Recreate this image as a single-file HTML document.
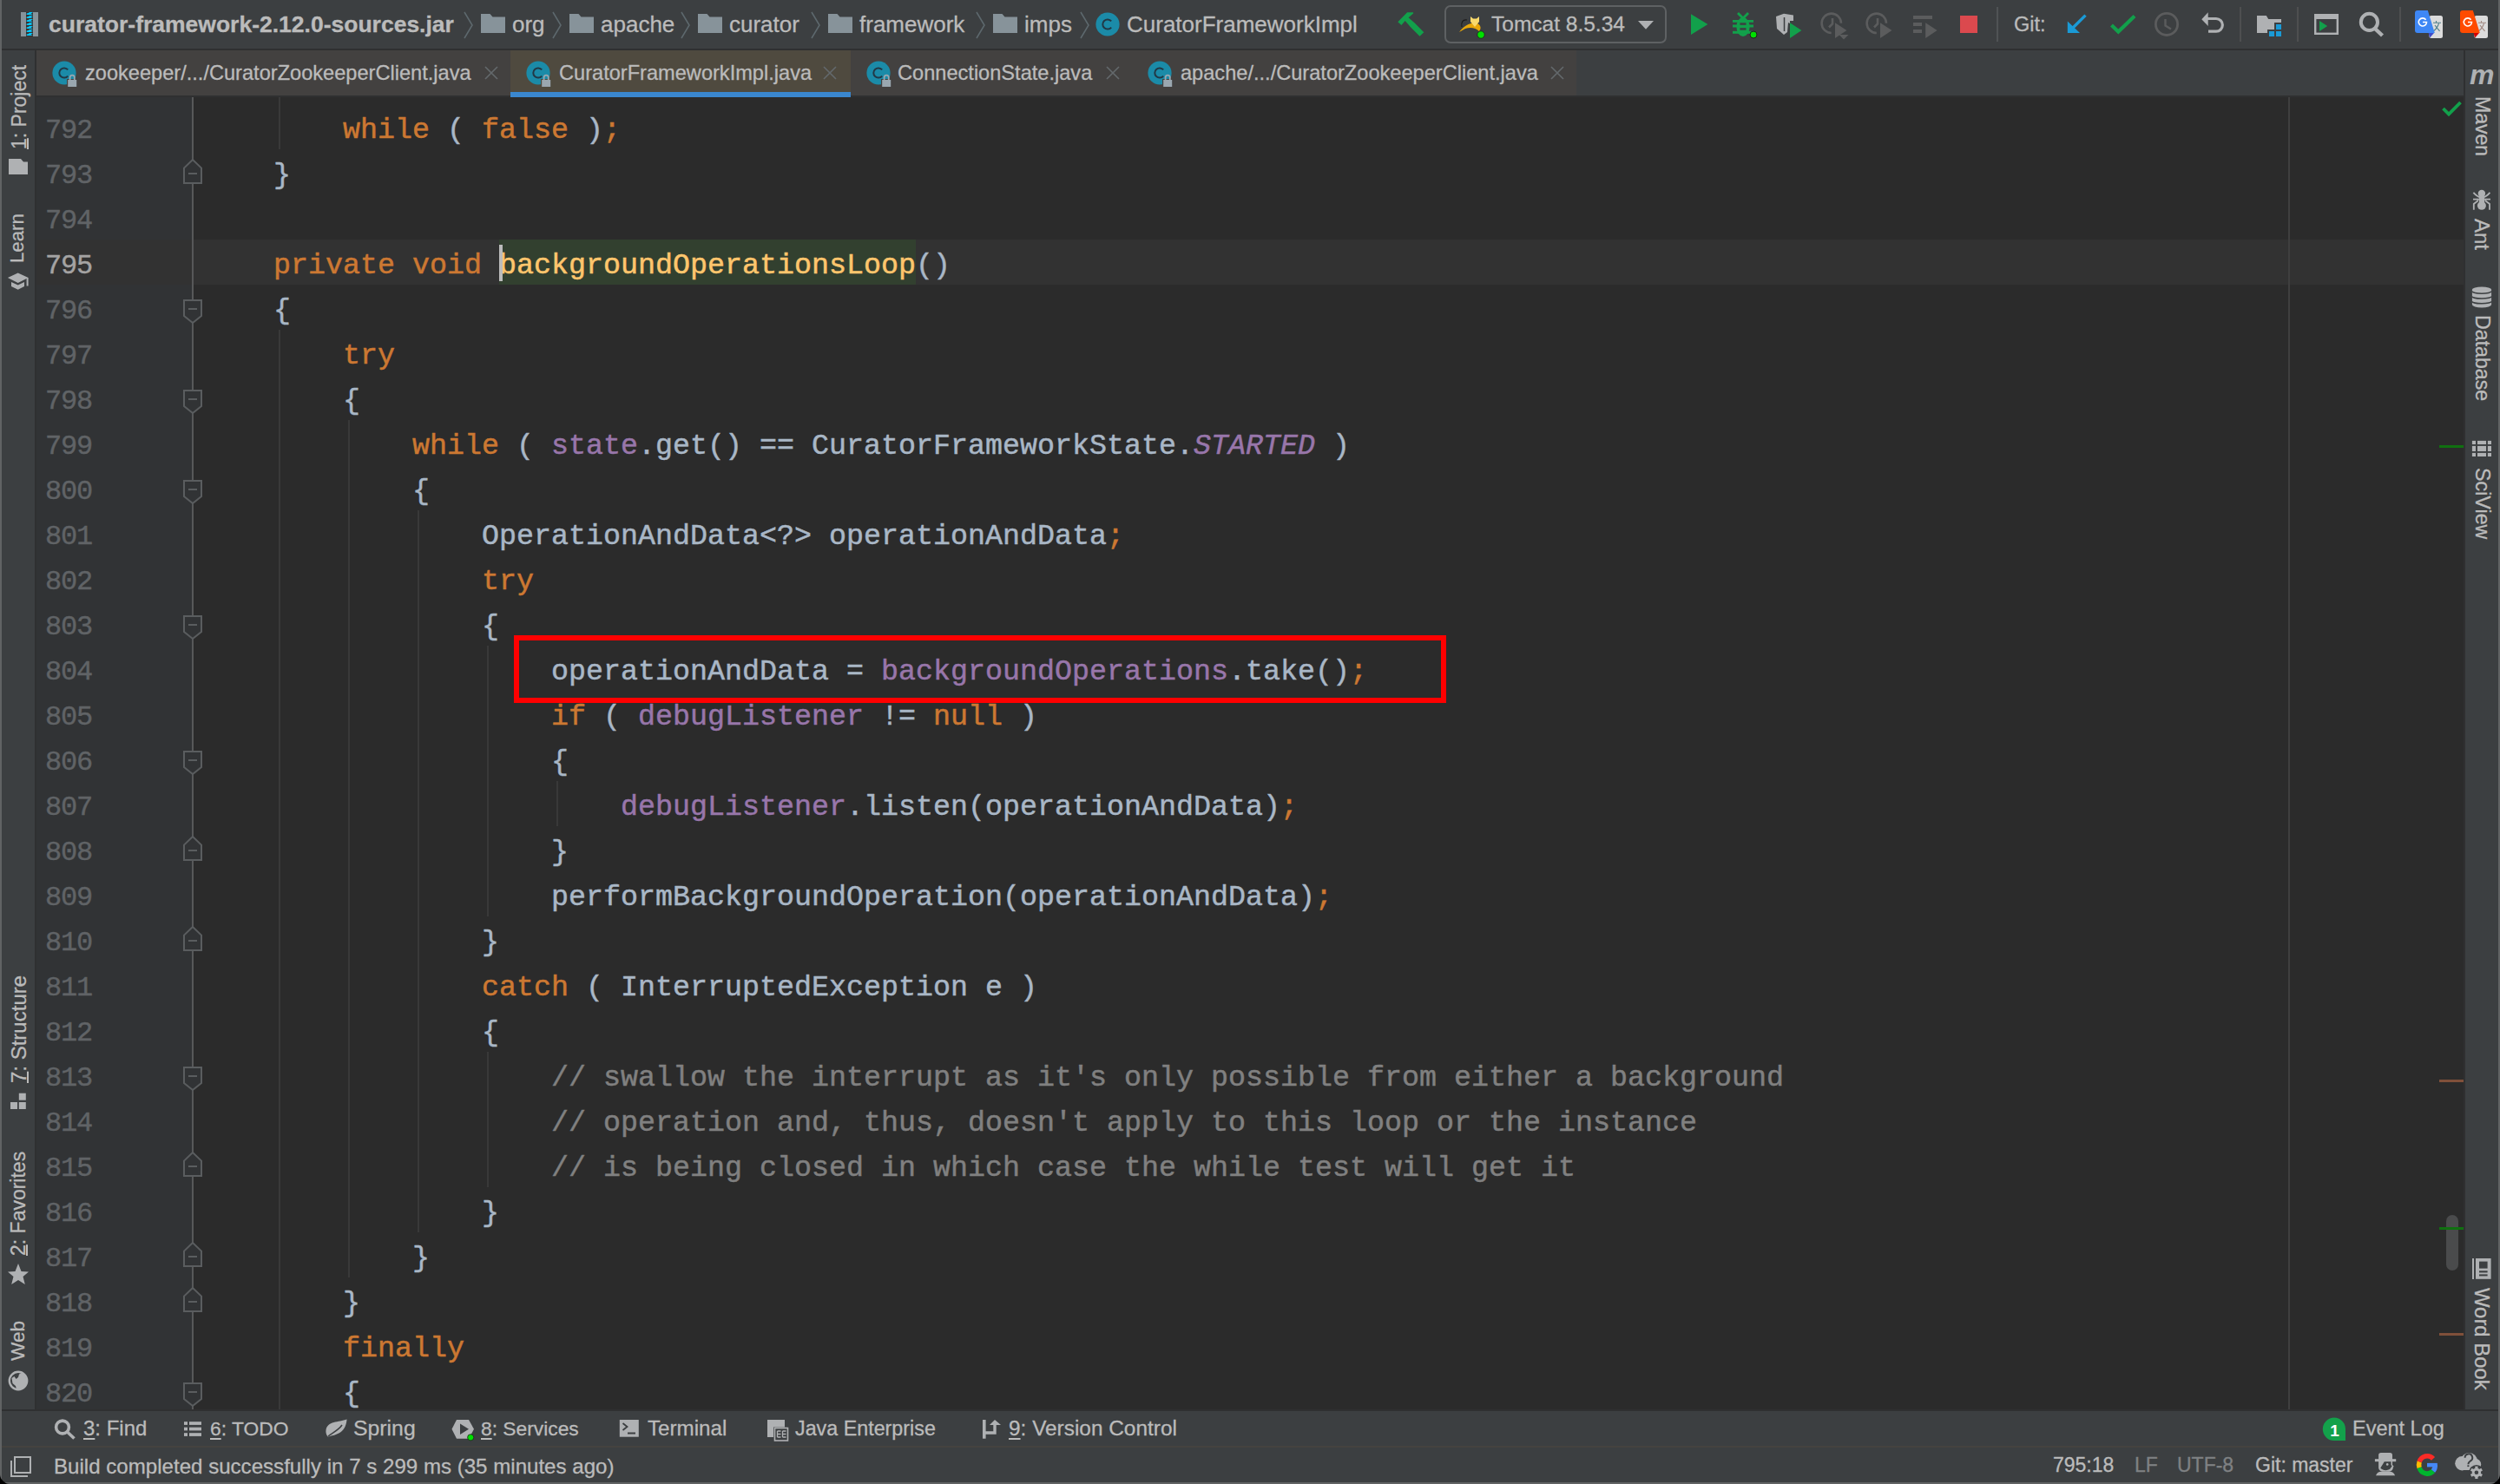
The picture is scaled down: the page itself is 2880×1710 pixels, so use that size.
<!DOCTYPE html>
<html><head><meta charset="utf-8">
<style>
*{margin:0;padding:0;box-sizing:border-box}
html,body{width:2880px;height:1710px;overflow:hidden;background:#000}
body{position:relative;font-family:"Liberation Sans",sans-serif}
.abs{position:absolute}
#win{position:absolute;left:0;top:0;width:2880px;height:1710px;background:#3C3F41;border-radius:0 0 12px 12px;overflow:hidden}
.bd{position:absolute;background:#616364}
.dk{position:absolute;background:#2F3031}
#nav{position:absolute;left:2px;top:0;width:2876px;height:56px;background:#3C3F41}
.nt,.tt,.bt,.st,.vt{-webkit-text-stroke:0.3px currentColor}
.nt{position:absolute;top:0;height:56px;line-height:56px;font-size:26px;color:#BBBBBB;white-space:nowrap}
.tab{position:absolute;top:58px;height:52px;background:#434140}
.tt{position:absolute;top:58px;height:52px;line-height:52px;font-size:23.6px;color:#BBBBBB;white-space:nowrap}
#gutter{position:absolute;left:42px;top:112px;width:181px;height:1512px;background:#313335}
#editor{position:absolute;left:223px;top:112px;width:2615px;height:1512px;background:#2B2B2B}
.ln{position:absolute;height:52px;line-height:52px;font-family:"Liberation Mono",monospace;font-size:33.333px;white-space:pre;color:#A9B7C6}
.ln span{position:relative;top:4px;-webkit-text-stroke:0.5px currentColor}
.num{position:absolute;left:42px;width:64px;text-align:right;height:52px;line-height:52px;font-family:"Liberation Mono",monospace;font-size:32px;letter-spacing:-1.2px;padding-top:5px;color:#606366;white-space:pre}
.num{-webkit-text-stroke:0.4px currentColor}
.num.cur{color:#A4A3A3}
.k{color:#CC7832}.t{color:#A9B7C6}.f{color:#9876AA}.m{color:#FFC66D}.c{color:#808080}.i{color:#9876AA;font-style:italic}
.guide{position:absolute;width:2px;background:#393939}
.fold{position:absolute;left:210px}
.vt{position:absolute;font-size:23px;line-height:23px;color:#BBBBBB;white-space:nowrap;transform-origin:0 0}
.bt{position:absolute;top:1626px;height:40px;line-height:40px;font-size:24px;color:#BBBBBB;white-space:nowrap}
.st{position:absolute;top:1668px;height:40px;line-height:40px;font-size:23.5px;color:#BBBBBB;white-space:nowrap}
u{text-decoration:underline;text-underline-offset:3px}
.vt u{text-underline-offset:1px}
</style></head><body>
<div id="win">
  <!-- navbar -->
  <div id="nav"></div>
  <div class="dk" style="left:0;top:56px;width:2880px;height:2px"></div>
  <div class="nt" style="left:56px;font-weight:bold;font-size:26.5px">curator-framework-2.12.0-sources.jar</div>
  <div class="nt" style="left:590px">org</div>
  <div class="nt" style="left:692px">apache</div>
  <div class="nt" style="left:840px">curator</div>
  <div class="nt" style="left:990px">framework</div>
  <div class="nt" style="left:1180px">imps</div>
  <div class="nt" style="left:1298px">CuratorFrameworkImpl</div>
  <div class="nt" style="left:1718px;font-size:24.5px">Tomcat 8.5.34</div>
  <div class="nt" style="left:2320px;font-size:23.5px">Git:</div>

  <!-- left strip -->
  <div class="abs" style="left:2px;top:58px;width:38px;height:1566px;background:#3C3F41"></div>
  <div class="dk" style="left:40px;top:58px;width:2px;height:1566px"></div>
  <!-- right strip -->
  <div class="dk" style="left:2838px;top:58px;width:2px;height:1566px"></div>
  <div class="abs" style="left:2840px;top:58px;width:38px;height:1566px;background:#3C3F41"></div>

  <!-- tabs -->
  <div class="tab" style="left:42px;width:546px"></div>
  <div class="tab" style="left:588px;width:392px;background:#4F4A3F"></div>
  <div class="tab" style="left:980px;width:836px"></div>
  <div class="tt" style="left:98px">zookeeper/.../CuratorZookeeperClient.java</div>
  <div class="tt" style="left:644px">CuratorFrameworkImpl.java</div>
  <div class="tt" style="left:1034px">ConnectionState.java</div>
  <div class="tt" style="left:1360px">apache/.../CuratorZookeeperClient.java</div>

  <!-- editor -->
  <div class="dk" style="left:42px;top:110px;width:2796px;height:2px"></div>
  <div id="gutter"></div>
  <div id="editor"></div>
  <div class="abs" style="left:42px;top:276px;width:181px;height:52px;background:#323232"></div>
  <div class="abs" style="left:223px;top:276px;width:2615px;height:52px;background:#323232"></div>
  <div class="abs" style="left:575px;top:276px;width:480px;height:52px;background:#32402F"></div>
  <div class="abs" style="left:221px;top:112px;width:2px;height:1512px;background:#575859"></div>
  <div class="abs" style="left:2636px;top:112px;width:2px;height:1512px;background:#3F3F3F"></div>
  <div class="abs" style="left:588px;top:106px;width:392px;height:6px;background:#3A87CF"></div>
<div class="guide" style="left:321px;top:112px;height:60px"></div>
<div class="guide" style="left:321px;top:380px;height:1244px"></div>
<div class="guide" style="left:401px;top:484px;height:988px"></div>
<div class="guide" style="left:481px;top:588px;height:832px"></div>
<div class="guide" style="left:561px;top:744px;height:312px"></div>
<div class="guide" style="left:641px;top:900px;height:52px"></div>
<div class="guide" style="left:561px;top:1212px;height:156px"></div>
<div class="ln" style="top:120px;left:395px"><span class="k">while</span><span class="t"> ( </span><span class="k">false</span><span class="t"> )</span><span class="k">;</span></div>
<div class="num" style="top:120px">792</div>
<div class="ln" style="top:172px;left:315px"><span class="t">}</span></div>
<div class="num" style="top:172px">793</div>
<div class="ln" style="top:224px;left:235px"></div>
<div class="num" style="top:224px">794</div>
<div class="ln" style="top:276px;left:315px"><span class="k">private void </span><span class="m">backgroundOperationsLoop</span><span class="t">()</span></div>
<div class="num cur" style="top:276px">795</div>
<div class="ln" style="top:328px;left:315px"><span class="t">{</span></div>
<div class="num" style="top:328px">796</div>
<div class="ln" style="top:380px;left:395px"><span class="k">try</span></div>
<div class="num" style="top:380px">797</div>
<div class="ln" style="top:432px;left:395px"><span class="t">{</span></div>
<div class="num" style="top:432px">798</div>
<div class="ln" style="top:484px;left:475px"><span class="k">while</span><span class="t"> ( </span><span class="f">state</span><span class="t">.get() == CuratorFrameworkState.</span><span class="i">STARTED</span><span class="t"> )</span></div>
<div class="num" style="top:484px">799</div>
<div class="ln" style="top:536px;left:475px"><span class="t">{</span></div>
<div class="num" style="top:536px">800</div>
<div class="ln" style="top:588px;left:555px"><span class="t">OperationAndData&lt;?&gt; operationAndData</span><span class="k">;</span></div>
<div class="num" style="top:588px">801</div>
<div class="ln" style="top:640px;left:555px"><span class="k">try</span></div>
<div class="num" style="top:640px">802</div>
<div class="ln" style="top:692px;left:555px"><span class="t">{</span></div>
<div class="num" style="top:692px">803</div>
<div class="ln" style="top:744px;left:635px"><span class="t">operationAndData = </span><span class="f">backgroundOperations</span><span class="t">.take()</span><span class="k">;</span></div>
<div class="num" style="top:744px">804</div>
<div class="ln" style="top:796px;left:635px"><span class="k">if</span><span class="t"> ( </span><span class="f">debugListener</span><span class="t"> != </span><span class="k">null</span><span class="t"> )</span></div>
<div class="num" style="top:796px">805</div>
<div class="ln" style="top:848px;left:635px"><span class="t">{</span></div>
<div class="num" style="top:848px">806</div>
<div class="ln" style="top:900px;left:715px"><span class="f">debugListener</span><span class="t">.listen(operationAndData)</span><span class="k">;</span></div>
<div class="num" style="top:900px">807</div>
<div class="ln" style="top:952px;left:635px"><span class="t">}</span></div>
<div class="num" style="top:952px">808</div>
<div class="ln" style="top:1004px;left:635px"><span class="t">performBackgroundOperation(operationAndData)</span><span class="k">;</span></div>
<div class="num" style="top:1004px">809</div>
<div class="ln" style="top:1056px;left:555px"><span class="t">}</span></div>
<div class="num" style="top:1056px">810</div>
<div class="ln" style="top:1108px;left:555px"><span class="k">catch</span><span class="t"> ( InterruptedException e )</span></div>
<div class="num" style="top:1108px">811</div>
<div class="ln" style="top:1160px;left:555px"><span class="t">{</span></div>
<div class="num" style="top:1160px">812</div>
<div class="ln" style="top:1212px;left:635px"><span class="c">// swallow the interrupt as it&#x27;s only possible from either a background</span></div>
<div class="num" style="top:1212px">813</div>
<div class="ln" style="top:1264px;left:635px"><span class="c">// operation and, thus, doesn&#x27;t apply to this loop or the instance</span></div>
<div class="num" style="top:1264px">814</div>
<div class="ln" style="top:1316px;left:635px"><span class="c">// is being closed in which case the while test will get it</span></div>
<div class="num" style="top:1316px">815</div>
<div class="ln" style="top:1368px;left:555px"><span class="t">}</span></div>
<div class="num" style="top:1368px">816</div>
<div class="ln" style="top:1420px;left:475px"><span class="t">}</span></div>
<div class="num" style="top:1420px">817</div>
<div class="ln" style="top:1472px;left:395px"><span class="t">}</span></div>
<div class="num" style="top:1472px">818</div>
<div class="ln" style="top:1524px;left:395px"><span class="k">finally</span></div>
<div class="num" style="top:1524px">819</div>
<div class="ln" style="top:1576px;left:395px"><span class="t">{</span></div>
<div class="num" style="top:1576px">820</div>
<svg class="fold" style="top:183px" width="24" height="29" viewBox="0 0 24 29"><path d="M2 28 H22 V10.6 L12 1 L2 10.6 Z" fill="#313335" stroke="#5A5D5F" stroke-width="2"/><path d="M7 17H17" stroke="#5A5D5F" stroke-width="2"/></svg>
<svg class="fold" style="top:345px" width="24" height="29" viewBox="0 0 24 29"><path d="M2 1 H22 V19 L12 27 L2 19 Z" fill="#313335" stroke="#5A5D5F" stroke-width="2"/><path d="M7 11H17" stroke="#5A5D5F" stroke-width="2"/></svg>
<svg class="fold" style="top:449px" width="24" height="29" viewBox="0 0 24 29"><path d="M2 1 H22 V19 L12 27 L2 19 Z" fill="#313335" stroke="#5A5D5F" stroke-width="2"/><path d="M7 11H17" stroke="#5A5D5F" stroke-width="2"/></svg>
<svg class="fold" style="top:553px" width="24" height="29" viewBox="0 0 24 29"><path d="M2 1 H22 V19 L12 27 L2 19 Z" fill="#313335" stroke="#5A5D5F" stroke-width="2"/><path d="M7 11H17" stroke="#5A5D5F" stroke-width="2"/></svg>
<svg class="fold" style="top:709px" width="24" height="29" viewBox="0 0 24 29"><path d="M2 1 H22 V19 L12 27 L2 19 Z" fill="#313335" stroke="#5A5D5F" stroke-width="2"/><path d="M7 11H17" stroke="#5A5D5F" stroke-width="2"/></svg>
<svg class="fold" style="top:865px" width="24" height="29" viewBox="0 0 24 29"><path d="M2 1 H22 V19 L12 27 L2 19 Z" fill="#313335" stroke="#5A5D5F" stroke-width="2"/><path d="M7 11H17" stroke="#5A5D5F" stroke-width="2"/></svg>
<svg class="fold" style="top:963px" width="24" height="29" viewBox="0 0 24 29"><path d="M2 28 H22 V10.6 L12 1 L2 10.6 Z" fill="#313335" stroke="#5A5D5F" stroke-width="2"/><path d="M7 17H17" stroke="#5A5D5F" stroke-width="2"/></svg>
<svg class="fold" style="top:1067px" width="24" height="29" viewBox="0 0 24 29"><path d="M2 28 H22 V10.6 L12 1 L2 10.6 Z" fill="#313335" stroke="#5A5D5F" stroke-width="2"/><path d="M7 17H17" stroke="#5A5D5F" stroke-width="2"/></svg>
<svg class="fold" style="top:1229px" width="24" height="29" viewBox="0 0 24 29"><path d="M2 1 H22 V19 L12 27 L2 19 Z" fill="#313335" stroke="#5A5D5F" stroke-width="2"/><path d="M7 11H17" stroke="#5A5D5F" stroke-width="2"/></svg>
<svg class="fold" style="top:1327px" width="24" height="29" viewBox="0 0 24 29"><path d="M2 28 H22 V10.6 L12 1 L2 10.6 Z" fill="#313335" stroke="#5A5D5F" stroke-width="2"/><path d="M7 17H17" stroke="#5A5D5F" stroke-width="2"/></svg>
<svg class="fold" style="top:1431px" width="24" height="29" viewBox="0 0 24 29"><path d="M2 28 H22 V10.6 L12 1 L2 10.6 Z" fill="#313335" stroke="#5A5D5F" stroke-width="2"/><path d="M7 17H17" stroke="#5A5D5F" stroke-width="2"/></svg>
<svg class="fold" style="top:1483px" width="24" height="29" viewBox="0 0 24 29"><path d="M2 28 H22 V10.6 L12 1 L2 10.6 Z" fill="#313335" stroke="#5A5D5F" stroke-width="2"/><path d="M7 17H17" stroke="#5A5D5F" stroke-width="2"/></svg>
<svg class="fold" style="top:1593px" width="24" height="29" viewBox="0 0 24 29"><path d="M2 1 H22 V19 L12 27 L2 19 Z" fill="#313335" stroke="#5A5D5F" stroke-width="2"/><path d="M7 11H17" stroke="#5A5D5F" stroke-width="2"/></svg>
  <div class="abs" style="left:575px;top:282px;width:4px;height:42px;background:#BBBBBB"></div>
  <!-- red box -->
  <div class="abs" style="left:592px;top:732px;width:1074px;height:78px;border:6px solid #FF0000"></div>

  <!-- bottom tool bar -->
  <div class="dk" style="left:0;top:1624px;width:2880px;height:2px"></div>
  <div class="abs" style="left:2px;top:1666px;width:2876px;height:2px;background:#45433F"></div>
  <div class="bt" style="left:96px"><u>3</u>: Find</div>
  <div class="bt" style="left:242px;font-size:22.8px"><u>6</u>: TODO</div>
  <div class="bt" style="left:407px;font-size:24.8px">Spring</div>
  <div class="bt" style="left:554px;font-size:22.8px"><u>8</u>: Services</div>
  <div class="bt" style="left:746px;font-size:24.2px">Terminal</div>
  <div class="bt" style="left:916px;font-size:23.3px">Java Enterprise</div>
  <div class="bt" style="left:1162px;font-size:24.4px"><u>9</u>: Version Control</div>
  <div class="bt" style="left:2710px;font-size:23.5px">Event Log</div>

  <!-- status bar -->
  <div class="st" style="left:62px;top:1670px;font-size:24.1px">Build completed successfully in 7 s 299 ms (35 minutes ago)</div>
  <div class="st" style="left:2365px;font-size:23px">795:18</div>
  <div class="st" style="left:2459px;font-size:23px;color:#7F8183">LF</div>
  <div class="st" style="left:2508px;font-size:23px;color:#7F8183">UTF-8</div>
  <div class="st" style="left:2598px;font-size:23px">Git: master</div>


  <!-- vertical strip texts -->
  <div class="vt" style="left:10.5px;top:172px;transform:rotate(-90deg)"><u>1</u>: Project</div>
  <div class="vt" style="left:8px;top:302.5px;font-size:22.2px;transform:rotate(-90deg)">Learn</div>
  <div class="vt" style="left:10px;top:1248px;font-size:24px;transform:rotate(-90deg)"><u>7</u>: Structure</div>
  <div class="vt" style="left:9.5px;top:1447px;transform:rotate(-90deg)"><u>2</u>: Favorites</div>
  <div class="vt" style="left:8.5px;top:1568px;font-size:22.6px;transform:rotate(-90deg)">Web</div>
  <div class="vt" style="left:2871px;top:111px;transform:rotate(90deg)">Maven</div>
  <div class="vt" style="left:2871px;top:252px;font-size:24px;transform:rotate(90deg)">Ant</div>
  <div class="vt" style="left:2871px;top:363px;font-size:23.2px;transform:rotate(90deg)">Database</div>
  <div class="vt" style="left:2871px;top:538.5px;font-size:23.3px;transform:rotate(90deg)">SciView</div>
  <div class="vt" style="left:2871px;top:1484px;font-size:23.9px;transform:rotate(90deg)">Word Book</div>
  <div class="abs" style="left:2845px;top:70px;font-size:32px;font-weight:bold;font-style:italic;color:#AFB1B3;line-height:32px">m</div>
<svg class="abs" style="left:0;top:0" width="2880" height="1710" viewBox="0 0 2880 1710">

<!-- navbar -->
<rect x="24" y="14" width="6" height="28" fill="#87939A"/>
<rect x="38" y="14" width="6" height="28" fill="#87939A"/>
<rect x="30" y="14" width="8" height="28" fill="#3E302C"/>
<path d="M30 17 l4 -3 h4 l-4 3 z M30 21 l4 -3 h4 l-4 3 z M30 25 l4 -3 h4 l-4 3 z M30 29 l4 -3 h4 l-4 3 z M30 33 l4 -3 h4 l-4 3 z M30 37 l4 -3 h4 l-4 3 z M30 41 l4 -3 h4 l-4 3 z" fill="#00C8FF"/>
<path d="M30 15 l4 2 h4 l-4 -2 z M30 19 l4 2 h4 l-4 -2 z M30 23 l4 2 h4 l-4 -2 z M30 27 l4 2 h4 l-4 -2 z M30 31 l4 2 h4 l-4 -2 z M30 35 l4 2 h4 l-4 -2 z M30 39 l4 2 h4 l-4 -2 z" fill="#00C8FF" opacity="0.9"/>
<g transform="translate(535 14)"><path d="M0 0 L9 15 L0 30" fill="none" stroke="#5D686D" stroke-width="1.6"/></g>
<g transform="translate(554 16)">
  <path d="M0 0 H10.5 L13.5 3.6 H28 V22 H0 Z" fill="#87939A"/></g>
<g transform="translate(637 14)"><path d="M0 0 L9 15 L0 30" fill="none" stroke="#5D686D" stroke-width="1.6"/></g>
<g transform="translate(656 16)">
  <path d="M0 0 H10.5 L13.5 3.6 H28 V22 H0 Z" fill="#87939A"/></g>
<g transform="translate(785 14)"><path d="M0 0 L9 15 L0 30" fill="none" stroke="#5D686D" stroke-width="1.6"/></g>
<g transform="translate(804 16)">
  <path d="M0 0 H10.5 L13.5 3.6 H28 V22 H0 Z" fill="#87939A"/></g>
<g transform="translate(935 14)"><path d="M0 0 L9 15 L0 30" fill="none" stroke="#5D686D" stroke-width="1.6"/></g>
<g transform="translate(954 16)">
  <path d="M0 0 H10.5 L13.5 3.6 H28 V22 H0 Z" fill="#87939A"/></g>
<g transform="translate(1125 14)"><path d="M0 0 L9 15 L0 30" fill="none" stroke="#5D686D" stroke-width="1.6"/></g>
<g transform="translate(1144 16)">
  <path d="M0 0 H10.5 L13.5 3.6 H28 V22 H0 Z" fill="#87939A"/></g>
<g transform="translate(1245 14)"><path d="M0 0 L9 15 L0 30" fill="none" stroke="#5D686D" stroke-width="1.6"/></g>
<g transform="translate(1276 28)">
  <circle cx="0" cy="0" r="13.6" fill="#1B8BA8"/>
  <path d="M4.2 -3.6 A5.6 5.6 0 1 0 4.2 3.6" fill="none" stroke="#223845" stroke-width="2"/></g>
<!-- hammer -->
<path d="M1610.3 25.2 L1621.1 14.2 L1628.1 14.2 L1628.1 15.4 L1622.6 20.2 L1629.7 26.6 L1640.3 37.2 L1635.5 41.8 L1625 31.2 L1618.7 24 L1614.4 29 Z" fill="#12A04B"/>
<!-- tomcat box -->
<rect x="1665" y="7" width="254" height="42" rx="6" fill="none" stroke="#5E6163" stroke-width="2"/>
<path d="M1681 37 C1686 30 1692 27 1699 26 C1704 27 1708 31 1704 36 C1700 32 1694 31 1688 33 Z" fill="#E8A70A"/>
<path d="M1694 22 L1694 19 L1697 21.5 L1701 21.5 L1704 19 L1704 25 L1699 31 L1694 25 Z" fill="#F9D96C"/>
<path d="M1684 31 C1683 26 1685 22 1690 23" fill="none" stroke="#1A1A1A" stroke-width="1.2"/>
<circle cx="1706" cy="40" r="4.2" fill="#00E000" stroke="#202020" stroke-width="0.8"/>
<path d="M1887 24 H1905 L1896 33.8 Z" fill="#AFB1B3"/>
<!-- run debug etc -->
<path d="M1948 16.2 V40 L1967.4 28 Z" fill="#12A04B"/>
<g fill="#12A04B">
 <ellipse cx="2008" cy="31" rx="7.6" ry="11"/>
 <rect x="1996" y="23" width="24" height="2.8"/>
 <rect x="1996" y="28.5" width="24" height="3"/>
 <rect x="1996" y="35.8" width="24" height="3"/>
 <path d="M2001 16 L2003 14 L2008 19 L2013 14 L2015 16 L2010 21 L2006 21 Z"/>
</g>
<rect x="2004.4" y="26.3" width="7.1" height="2.5" fill="#3C3F41"/>
<rect x="2004.4" y="32.2" width="7.1" height="2.5" fill="#3C3F41"/>
<circle cx="2020" cy="40" r="4" fill="#00E000" stroke="#202020" stroke-width="1"/>
<path d="M2046 19 L2055 15.8 L2066 17.5 V24 L2062 24 L2062 27 L2060 26 L2059 37 L2055 40 L2047 33 Z" fill="#AFB1B3"/>
<path d="M2055.5 20 V36" stroke="#3C3F41" stroke-width="1.5"/>
<path d="M2062 26.3 V44 L2075.4 35 Z" fill="#12A04B"/>
<g fill="none" stroke="#5B5C5D" stroke-width="2.6">
 <path d="M2121 26.7 A11.2 11.2 0 1 0 2109.7 38"/>
 <path d="M2111 21 V27.5 L2107 31.5"/>
 <path d="M2173 26.7 A11.2 11.2 0 1 0 2161.8 38"/>
 <path d="M2163 21 V27.5 L2159 31.5"/>
</g>
<g fill="#5B5C5D">
 <path d="M2114 26.3 V44 L2127.4 34.9 Z"/>
 <path d="M2118.6 40.1 H2129.5 L2124 45.6 Z"/>
 <path d="M2166 26.3 V44 L2179.5 34.9 Z"/>
 <rect x="2204" y="18" width="22" height="4"/>
 <rect x="2204" y="26" width="10" height="4"/>
 <rect x="2204" y="34" width="10" height="4"/>
 <path d="M2218.2 26.3 V44 L2231.6 34.9 Z"/>
</g>
<rect x="2258" y="18" width="20" height="20" fill="#DB494E"/>
<rect x="2300" y="8" width="2" height="40" fill="#505355"/>
<!-- git -->
<path d="M2381.8 24.5 V38.1 H2396 Z" fill="#1A9AD6"/>
<path d="M2387 33 L2402.5 17.6" stroke="#1A9AD6" stroke-width="3.4"/>
<path d="M2432.5 29 L2440.3 36.5 L2459 18.5" fill="none" stroke="#12A04B" stroke-width="4.2"/>
<circle cx="2496" cy="27.9" r="12.6" fill="none" stroke="#5B5C5D" stroke-width="2.8"/>
<path d="M2494.5 22 V29.5 L2501 33.5" fill="none" stroke="#5B5C5D" stroke-width="2.4"/>
<path d="M2536.3 22.2 L2543.7 14.2 V30 Z" fill="#AFB1B3"/>
<path d="M2543 21.5 H2553 A7.3 7.3 0 0 1 2553 36.2 H2544" fill="none" stroke="#AFB1B3" stroke-width="3.2"/>
<rect x="2580" y="8" width="2" height="40" fill="#4E4F50"/>
<path d="M2600 18 H2610.8 L2613.2 22 H2628 V26 H2620 V34 H2612 V38 H2600 Z" fill="#AFB1B3"/>
<rect x="2622" y="28" width="6" height="6" fill="#1A9AD6"/>
<rect x="2614" y="36" width="6" height="6" fill="#1A9AD6"/>
<rect x="2622" y="36" width="6" height="6" fill="#1A9AD6"/>
<rect x="2646" y="8" width="2" height="40" fill="#4E4F50"/>
<rect x="2667.2" y="17.2" width="25.6" height="21.6" fill="none" stroke="#AFB1B3" stroke-width="2.4"/>
<rect x="2666" y="16" width="28" height="6" fill="#AFB1B3"/>
<path d="M2672 24 V36 L2681.2 30 Z" fill="#12A04B"/>
<circle cx="2729.4" cy="25.4" r="9.6" fill="none" stroke="#AFB1B3" stroke-width="4"/>
<path d="M2736 33 L2744.5 41" stroke="#AFB1B3" stroke-width="4.4"/>
<rect x="2764" y="8" width="2" height="40" fill="#4E4F50"/>
<!-- google translate -->
<g>
 <rect x="2798.4" y="18" width="15.6" height="26" rx="2.5" fill="#DCDCDC"/>
 <path d="M2803 26.2 H2812 M2806.5 24 V26.5 M2809.5 27 C2808 32 2806 34 2803 36 M2805 29 C2807 32 2809 34 2810.5 36" fill="none" stroke="#4F7F8A" stroke-width="1.1"/>
 <path d="M2797.6 38 H2804 L2799.2 43.6 Z" fill="#3F4BC8"/>
 <path d="M2785 12 H2796.8 L2804.8 38 H2785 A3 3 0 0 1 2782 35 V15 A3 3 0 0 1 2785 12 Z" fill="#3E87F5"/>
 <path d="M2794.6 22.7 A4.6 4.6 0 1 0 2795.5 25.5 H2791" fill="none" stroke="#FFFFFF" stroke-width="1.6"/>
</g>
<g transform="translate(52 0)">
 <rect x="2798.4" y="18" width="15.6" height="26" rx="2.5" fill="#DCDCDC"/>
 <path d="M2803 26.2 H2812 M2806.5 24 V26.5 M2809.5 27 C2808 32 2806 34 2803 36 M2805 29 C2807 32 2809 34 2810.5 36" fill="none" stroke="#A08880" stroke-width="1.1"/>
 <path d="M2797.6 38 H2804 L2799.2 43.6 Z" fill="#D40000"/>
 <path d="M2785 12 H2796.8 L2804.8 38 H2785 A3 3 0 0 1 2782 35 V15 A3 3 0 0 1 2785 12 Z" fill="#FF4B00"/>
 <path d="M2794.6 22.7 A4.6 4.6 0 1 0 2795.5 25.5 H2791" fill="none" stroke="#FFFFFF" stroke-width="1.6"/>
</g>
<!-- tab icons -->
<g transform="translate(74 84)">
  
  <circle cx="0" cy="0" r="13.6" fill="#1B8BA8"/>
  <path d="M4.2 -3.6 A5.6 5.6 0 1 0 4.2 3.6" fill="none" stroke="#223845" stroke-width="2"/>
  <rect x="3" y="7" width="12.5" height="10" fill="#434140"/>
  <path d="M6.6 9 V5.2 a2.6 2.6 0 0 1 5.2 0 V9" fill="none" stroke="#9AA7B0" stroke-width="1.8"/>
  <rect x="4.2" y="8" width="10" height="8" fill="#9AA7B0"/></g>
<g transform="translate(546 0)"><g transform="translate(74 84)">
  <circle cx="0" cy="0" r="13.6" fill="#1B8BA8"/>
  <path d="M4.2 -3.6 A5.6 5.6 0 1 0 4.2 3.6" fill="none" stroke="#223845" stroke-width="2"/></g><rect x="77" y="91" width="12.5" height="10" fill="#4F4A3F"/><path d="M80.6 93 V89.2 a2.6 2.6 0 0 1 5.2 0 V93" fill="none" stroke="#9AA7B0" stroke-width="1.8"/><rect x="78.2" y="92" width="10" height="8" fill="#9AA7B0"/></g>
<g transform="translate(1012 84)">
  
  <circle cx="0" cy="0" r="13.6" fill="#1B8BA8"/>
  <path d="M4.2 -3.6 A5.6 5.6 0 1 0 4.2 3.6" fill="none" stroke="#223845" stroke-width="2"/>
  <rect x="3" y="7" width="12.5" height="10" fill="#434140"/>
  <path d="M6.6 9 V5.2 a2.6 2.6 0 0 1 5.2 0 V9" fill="none" stroke="#9AA7B0" stroke-width="1.8"/>
  <rect x="4.2" y="8" width="10" height="8" fill="#9AA7B0"/></g>
<g transform="translate(1336 84)">
  
  <circle cx="0" cy="0" r="13.6" fill="#1B8BA8"/>
  <path d="M4.2 -3.6 A5.6 5.6 0 1 0 4.2 3.6" fill="none" stroke="#223845" stroke-width="2"/>
  <rect x="3" y="7" width="12.5" height="10" fill="#434140"/>
  <path d="M6.6 9 V5.2 a2.6 2.6 0 0 1 5.2 0 V9" fill="none" stroke="#9AA7B0" stroke-width="1.8"/>
  <rect x="4.2" y="8" width="10" height="8" fill="#9AA7B0"/></g>
<g transform="translate(558 76)"><path d="M1 1 L15 15 M15 1 L1 15" stroke="#63686B" stroke-width="1.7"/></g>
<g transform="translate(948 76)"><path d="M1 1 L15 15 M15 1 L1 15" stroke="#63686B" stroke-width="1.7"/></g>
<g transform="translate(1274 76)"><path d="M1 1 L15 15 M15 1 L1 15" stroke="#63686B" stroke-width="1.7"/></g>
<g transform="translate(1786 76)"><path d="M1 1 L15 15 M15 1 L1 15" stroke="#63686B" stroke-width="1.7"/></g>
<!-- editor right markers -->
<path d="M2814.5 125 L2821 131.5 L2834.5 118" fill="none" stroke="#12A04B" stroke-width="3.8"/>
<rect x="2810" y="513" width="28" height="3" fill="#107010"/>
<rect x="2810" y="1244" width="28" height="3" fill="#80503A"/>
<rect x="2818" y="1400" width="14" height="64" rx="7" fill="#4A4B4C"/>
<rect x="2810" y="1414" width="28" height="3" fill="#107010"/>
<rect x="2810" y="1536" width="28" height="3" fill="#80503A"/>
<!-- left strip icons -->
<path d="M10 183 H24 L27 186.5 H32 V201 H10 Z" fill="#AFB1B3" transform="rotate(0)"/>
<path d="M8.9 320 L20.7 314.4 L32.6 320 L20.7 326 Z" fill="#AFB1B3"/>
<path d="M13 325 V330 L20.7 333.8 L28 330 V325 L20.7 328.6 Z" fill="#AFB1B3"/>
<path d="M31.6 320 V329.5" stroke="#AFB1B3" stroke-width="2"/>
<g fill="#AFB1B3">
 <rect x="12" y="1270" width="8" height="8"/><rect x="21.8" y="1259.7" width="8" height="8"/><rect x="21.8" y="1270" width="8" height="8"/>
</g>
<path d="M21 1456 L24.5 1465 L33 1465.5 L26.5 1471 L28.8 1480 L21 1475 L13.2 1480 L15.5 1471 L9 1465.5 L17.5 1465 Z" fill="#AFB1B3"/>
<circle cx="21" cy="1591" r="10.2" fill="none" stroke="#AFB1B3" stroke-width="2.4"/>
<path d="M13.5 1588 L16.5 1586 L18.5 1589 L21 1587 L22 1583.5 L25 1582 L28.5 1584.5 L31 1590 L29.5 1597 L24 1600.5 L19 1601 L18 1597 L14.5 1594 Z" fill="#AFB1B3"/>
<!-- right strip icons -->
<g fill="#AFB1B3">
 <circle cx="2858.9" cy="223" r="4.2"/>
 <ellipse cx="2858.9" cy="237" rx="5" ry="4.8"/>
 <rect x="2856" y="226" width="6" height="8"/>
</g>
<path d="M2849.4 221.9 C2852 225 2855 227 2858.9 228 C2863 227 2866 225 2868.4 221.9 M2849 229.6 H2869 M2849.8 241.8 V235 L2855 231 M2868 241.8 V235 L2862.8 231" stroke="#AFB1B3" stroke-width="1.8" fill="none"/>
<ellipse cx="2859" cy="333.8" rx="11.1" ry="3.4" fill="#AFB1B3"/>
<path d="M2847.9 333.8 V351 A11.1 3.4 0 0 0 2870.1 351 V333.8 Z" fill="#AFB1B3"/>
<g fill="none" stroke="#3C3F41" stroke-width="1.5">
 <path d="M2847.9 335.6 A11.1 2.6 0 0 0 2870.1 335.6"/>
 <path d="M2847.9 341.5 A11.1 2.6 0 0 0 2870.1 341.5"/>
 <path d="M2847.9 347.2 A11.1 2.6 0 0 0 2870.1 347.2"/>
</g>
<g fill="#AFB1B3"><rect x="2847.9" y="507.9" width="4.1" height="4.1"/><rect x="2847.9" y="513.9" width="4.1" height="6.1"/><rect x="2847.9" y="521.9" width="4.1" height="4.1"/><rect x="2854" y="507.9" width="10" height="4.1"/><rect x="2854" y="513.9" width="10" height="6.1"/><rect x="2854" y="521.9" width="10" height="4.1"/><rect x="2865.9" y="507.9" width="4.1" height="4.1"/><rect x="2865.9" y="513.9" width="4.1" height="6.1"/><rect x="2865.9" y="521.9" width="4.1" height="4.1"/></g>
<rect x="2848" y="1450" width="2" height="24" fill="#AFB1B3"/>
<rect x="2852" y="1450" width="17.6" height="23.8" fill="#AFB1B3"/>
<rect x="2856" y="1453.6" width="9.6" height="8" fill="#3C3F41"/>
<rect x="2856" y="1464.3" width="9.6" height="2.1" fill="#3C3F41"/>
<rect x="2856" y="1468.4" width="9.6" height="2" fill="#3C3F41"/>
<!-- bottom toolbar icons -->
<circle cx="72" cy="1644.5" r="7.4" fill="none" stroke="#AFB1B3" stroke-width="3.6"/>
<path d="M77.5 1650 L85.5 1657.5" stroke="#AFB1B3" stroke-width="3.6"/>
<g fill="#AFB1B3">
 <rect x="212" y="1638.2" width="4" height="3.7"/><rect x="218" y="1638.2" width="14" height="3.7"/>
 <rect x="212" y="1644.7" width="4" height="3.7"/><rect x="218" y="1644.7" width="14" height="3.7"/>
 <rect x="212" y="1651.2" width="4" height="3.7"/><rect x="218" y="1651.2" width="14" height="3.7"/>
</g>
<path d="M399.6 1635.4 C390 1639 377 1637 375.5 1648 C375 1652 377 1655 378 1655.5 C385 1653 398 1653 399.6 1635.4 Z" fill="#AFB1B3"/>
<path d="M378 1655 C383 1651 390 1648 394 1642" fill="none" stroke="#3C3F41" stroke-width="1.5"/>
<path d="M526 1636 H540 L546 1646.8 L540 1657.7 H526 L520.5 1646.8 Z" fill="#AFB1B3"/>
<path d="M530 1640.5 V1653 L540 1646.8 Z" fill="#3C3F41"/>
<circle cx="542.2" cy="1656.3" r="3.6" fill="#00E000" stroke="#202020" stroke-width="0.8"/>
<rect x="713.8" y="1636" width="22" height="19.7" fill="#AFB1B3"/>
<path d="M717.5 1640 L722.5 1644 L717.5 1648 M723 1651.5 H732" fill="none" stroke="#3C3F41" stroke-width="1.8"/>
<rect x="884" y="1636" width="20" height="20" fill="#AFB1B3"/>
<rect x="891" y="1644.5" width="18" height="16.5" fill="#3C3F41"/>
<rect x="892.5" y="1645.5" width="15" height="14.5" fill="none" stroke="#AFB1B3" stroke-width="1.6"/>
<path d="M895.5 1649 h4 M895.5 1652.5 h4 M895.5 1656 h4 M895.5 1649 v7 M901.5 1649 h4 M901.5 1652.5 h4 M901.5 1656 h4 M901.5 1649 v7" stroke="#AFB1B3" stroke-width="1.3"/>
<rect x="1132" y="1636" width="3.6" height="21.7" fill="#AFB1B3"/>
<path d="M1134 1651 H1146 V1641" fill="none" stroke="#AFB1B3" stroke-width="3.4"/>
<path d="M1140 1642 L1146 1636 L1153 1642 Z" fill="#AFB1B3"/>
<!-- event log badge -->
<path d="M2689 1633.6 A13.2 13.2 0 1 0 2689 1660 H2702 V1646.8 A13.2 13.2 0 0 0 2689 1633.6 Z" fill="#13A14B"/>
<text x="2689.5" y="1654.5" font-family="Liberation Sans" font-weight="bold" font-size="19" fill="#FFFFFF" text-anchor="middle">1</text>
<!-- status bar icons -->
<rect x="17" y="1679" width="18" height="18" fill="none" stroke="#AFB1B3" stroke-width="2"/>
<path d="M13 1683 V1701 H32" fill="none" stroke="#AFB1B3" stroke-width="2"/>
<g fill="#AFB1B3">
 <rect x="2740.1" y="1673.9" width="15.9" height="10.3" rx="2.8"/>
 <rect x="2735.9" y="1681.2" width="24.3" height="3"/>
 <path d="M2740.1 1684 V1691 C2740.1 1694 2742.5 1695.8 2746 1695.8 H2751 C2754.5 1695.8 2756.8 1694 2756.8 1691 L2757.6 1689.6 L2756 1687.9 V1684 Z"/>
 <path d="M2737 1700.2 C2738 1697 2740.5 1695.7 2743 1695.7 H2753 C2755.5 1695.7 2758 1697 2759.1 1700.2 Z"/>
</g>
<path d="M2746.8 1684.2 H2754.5 V1688 L2755.6 1689.6 L2754.2 1691.3 C2753.5 1693 2751.5 1694 2748.7 1694.2 C2745.5 1694 2743.3 1693 2742.3 1691.5 Z" fill="#3C3F41"/>
<circle cx="2750.2" cy="1687.4" r="1.3" fill="#AFB1B3"/>
<g fill="none" stroke-width="5.6">
 <path d="M2803 1680.8 A9.3 9.3 0 0 0 2787.2 1684.5" stroke="#FB2B26"/>
 <path d="M2787.2 1684.5 A9.3 9.3 0 0 0 2787.2 1691.3" stroke="#FFBA00"/>
 <path d="M2787.2 1691.3 A9.3 9.3 0 0 0 2803 1695" stroke="#00B52E"/>
 <path d="M2803 1695 A9.3 9.3 0 0 0 2805.1 1688" stroke="#4688F6"/>
</g>
<rect x="2796" y="1685.9" width="11.8" height="4.5" fill="#4688F6"/>
<g fill="#AFB1B3">
 <circle cx="2836.4" cy="1686.3" r="8.2"/>
 <circle cx="2844.4" cy="1683.4" r="9.5"/>
 <circle cx="2851.6" cy="1687.4" r="6.6"/>
 <rect x="2836.4" y="1685" width="15.2" height="9"/>
</g>
<path d="M2839.6 1679.7 A4.3 4.3 0 1 1 2845.8 1683.5 C2844.2 1684.6 2843.4 1685.6 2843.4 1687.3" fill="none" stroke="#3C3F41" stroke-width="2"/>
<rect x="2842.4" y="1688.3" width="2" height="1.8" fill="#3C3F41"/>
<circle cx="2852.9" cy="1696.8" r="8.8" fill="#3C3F41"/>
<g fill="#AFB1B3" transform="translate(2852.9 1696.8)">
 <circle r="5.2"/>
 <rect x="-1.6" y="-7.2" width="3.2" height="14.4"/>
 <rect x="-1.6" y="-7.2" width="3.2" height="14.4" transform="rotate(60)"/>
 <rect x="-1.6" y="-7.2" width="3.2" height="14.4" transform="rotate(120)"/>
</g>
<circle cx="2852.9" cy="1696.8" r="2.3" fill="#3C3F41"/>
</svg>

  <!-- window border -->
  <div class="bd" style="left:0;top:0;width:2px;height:1710px"></div>
  <div class="bd" style="left:2878px;top:0;width:2px;height:1710px"></div>
  <div class="bd" style="left:0;top:1708px;width:2880px;height:2px"></div>
</div>
</body></html>
